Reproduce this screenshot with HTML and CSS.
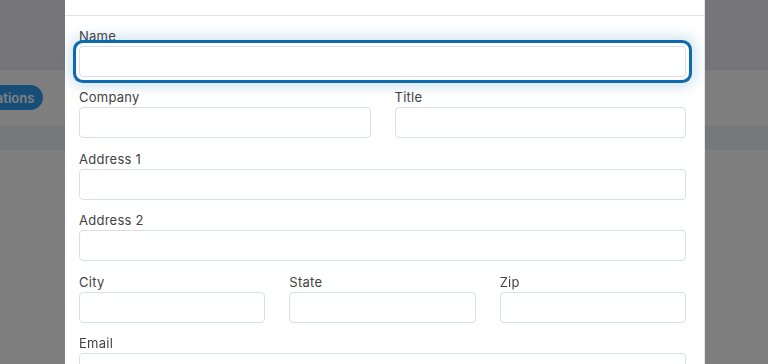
FILE: index.html
```html
<!DOCTYPE html>
<html lang="en">
<head>
  <meta charset="UTF-8" />
  <meta name="viewport" content="width=device-width, initial-scale=1.0" />
  <title>Edit Contact</title>
  <link rel="stylesheet" href="styles.css">
</head>
<body>
  <div class="app">
    <div class="topbar"></div>
    <div class="toolbar">
      <button class="pill">Integrations</button>
    </div>
    <div class="subbar"></div>
    <div class="content"></div>
  </div>

  <div class="overlay">
    <div class="modal">
      <div class="modal-header"></div>
      <form class="modal-body">
        <div class="field">
          <label>Name</label>
          <input type="text" class="focused">
        </div>
        <div class="row two">
          <div class="field">
            <label>Company</label>
            <input type="text">
          </div>
          <div class="field">
            <label>Title</label>
            <input type="text">
          </div>
        </div>
        <div class="field">
          <label>Address 1</label>
          <input type="text">
        </div>
        <div class="field">
          <label>Address 2</label>
          <input type="text">
        </div>
        <div class="row three">
          <div class="field">
            <label>City</label>
            <input type="text">
          </div>
          <div class="field">
            <label>State</label>
            <input type="text">
          </div>
          <div class="field">
            <label>Zip</label>
            <input type="text">
          </div>
        </div>
        <div class="field">
          <label>Email</label>
          <input type="text">
        </div>
      </form>
    </div>
  </div>
</body>
</html>
```

FILE: styles.css
```css
body, html {
  margin: 0;
  padding: 0;
  font-family: 'Inter', 'Open Sans', sans-serif;
  overflow: hidden;
  height: 100%;
}
.app {
  height: 100%;
  background: #fff;
  display: flex;
  flex-direction: column;
}
.topbar {
  height: 69px;
  background: #ececf2;
}
.toolbar {
  height: 56px;
  background: #fff;
  border-top: 1px solid #e0e0e0;
  display: flex;
  align-items: center;
  box-sizing: border-box;
}
.pill {
  margin-left: -50px;
  height: 25px;
  padding: 0 9px;
  border: none;
  border-radius: 13px;
  background: #2f9df0;
  color: #fff;
  font-family: inherit;
  font-size: 13px;
  font-weight: 600;
}
.subbar {
  height: 25px;
  background: #eef0f2;
}
.content {
  flex: 1;
  background: #fff;
}

.overlay {
  position: fixed;
  top: 0; left: 0;
  width: 100%;
  height: 100%;
  background: rgba(0, 0, 0, 0.5);
}
.modal {
  width: 640px;
  margin-left: 65px;
  height: 100%;
  background: #fff;
  border-right: 1px solid #e2e8ee;
  box-sizing: border-box;
}
.modal-header {
  height: 15px;
  border-bottom: 1px solid #dde4ea;
}
.modal-body {
  padding: 8.5px 18px 0 14px;
  display: flex;
  flex-direction: column;
  gap: 9.5px;
}
.row {
  display: grid;
  column-gap: 24px;
}
.row.two { grid-template-columns: 1fr 1fr; }
.row.three { grid-template-columns: 1fr 1fr 1fr; }

.field label {
  display: block;
  font-size: 13px;
  letter-spacing: 0.25px;
  line-height: 23px;
  color: #424242;
  margin-bottom: -2px;
}
.field input {
  display: block;
  width: 100%;
  height: 31px;
  box-sizing: border-box;
  border: 1px solid #d6e0e6;
  border-radius: 4px;
  background: #fff;
  outline: none;
}
.field input.focused {
  position: relative;
  box-shadow: 0 0 0 3px #fff, 0 0 0 6px #0b6bad, 0 0 14px 9px rgba(11, 107, 173, 0.2);
}
```
